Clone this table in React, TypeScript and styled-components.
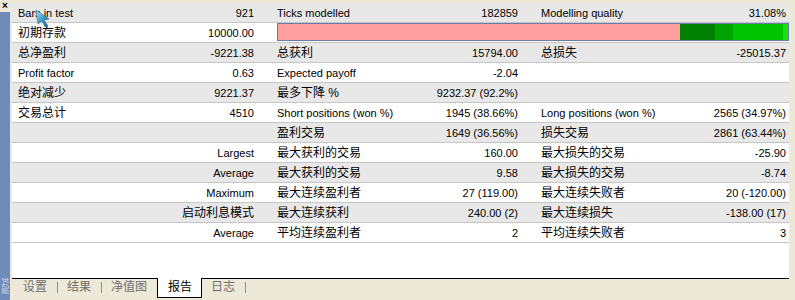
import React from 'react';
import styled, { createGlobalStyle } from 'styled-components';

type Pair = [string, string];

interface ReportRow {
  pairs: Pair[];
  bar?: boolean;
}

const rows: ReportRow[] = [
  { pairs: [['Bars in test', '921'], ['Ticks modelled', '182859'], ['Modelling quality', '31.08%']] },
  { pairs: [['初期存款', '10000.00']], bar: true },
  { pairs: [['总净盈利', '-9221.38'], ['总获利', '15794.00'], ['总损失', '-25015.37']] },
  { pairs: [['Profit factor', '0.63'], ['Expected payoff', '-2.04'], ['', '']] },
  { pairs: [['绝对减少', '9221.37'], ['最多下降 %', '9232.37 (92.2%)'], ['', '']] },
  { pairs: [['交易总计', '4510'], ['Short positions (won %)', '1945 (38.66%)'], ['Long positions (won %)', '2565 (34.97%)']] },
  { pairs: [['', ''], ['盈利交易', '1649 (36.56%)'], ['损失交易', '2861 (63.44%)']] },
  { pairs: [['', 'Largest'], ['最大获利的交易', '160.00'], ['最大损失的交易', '-25.90']] },
  { pairs: [['', 'Average'], ['最大获利的交易', '9.58'], ['最大损失的交易', '-8.74']] },
  { pairs: [['', 'Maximum'], ['最大连续盈利者', '27 (119.00)'], ['最大连续失败者', '20 (-120.00)']] },
  { pairs: [['', '启动利息模式'], ['最大连续获利', '240.00 (2)'], ['最大连续损失', '-138.00 (17)']] },
  { pairs: [['', 'Average'], ['平均连续盈利者', '2'], ['平均连续失败者', '3']] },
];

const tabs = ['设置', '结果', '净值图', '报告', '日志'];
const activeTab = '报告';

const isCjk = (s: string) => /[\u4e00-\u9fff]/.test(s);

const App: React.FC = () => {
  const activeIndex = tabs.indexOf(activeTab);

  return (
    <>
      <GlobalStyle />
      <Window>
        <SideStrip>
          <CloseBox>×</CloseBox>
          <SideLabel>测试</SideLabel>
        </SideStrip>

        <Main>
          <Report>
            {rows.map((row, i) => (
              <Row key={i} $shaded={i % 2 === 0}>
                {row.pairs.map(([label, value], j) => (
                  <Cell key={j} $col={j}>
                    <Text $cjk={isCjk(label)}>{label}</Text>
                    <Text $cjk={isCjk(value)}>{value}</Text>
                  </Cell>
                ))}
                {row.bar && <QualityBar />}
              </Row>
            ))}
            <Filler />
          </Report>

          <TabBar>
            {tabs.map((tab, i) => {
              const active = i === activeIndex;
              const showSep = !active && i !== activeIndex - 1;
              return (
                <React.Fragment key={tab}>
                  <Tab $active={active}>{tab}</Tab>
                  {showSep && <TabSep />}
                </React.Fragment>
              );
            })}
          </TabBar>
        </Main>

        <Cursor width="16" height="19" viewBox="0 0 16 19">
          <defs>
            <linearGradient id="cur" x1="0" y1="0" x2="1" y2="1">
              <stop offset="0" stopColor="#bfe3f2" />
              <stop offset="0.5" stopColor="#3d9cc8" />
              <stop offset="1" stopColor="#1c5f8c" />
            </linearGradient>
          </defs>
          <polygon points="1,1 14,10 9,11 13,17 10,18 7,12 3,15" fill="url(#cur)" stroke="#2b6f93" strokeWidth="0.6" />
        </Cursor>
      </Window>
    </>
  );
};

const GlobalStyle = createGlobalStyle`
  html, body {
    margin: 0;
    padding: 0;
    background: #ece9d8;
    overflow: hidden;
  }
`;

const Window = styled.div`
  position: relative;
  display: flex;
  width: 795px;
  height: 300px;
  background: #ece9d8;
  font-family: "Liberation Sans", "Noto Sans CJK SC", sans-serif;
  color: #000;
`;

const SideStrip = styled.div`
  width: 10px;
  display: flex;
  flex-direction: column;
  justify-content: space-between;
  align-items: center;
  background: #6f8bb7;
`;

const CloseBox = styled.div`
  width: 10px;
  height: 12px;
  background: #ece9d8;
  font-size: 10px;
  font-weight: bold;
  line-height: 12px;
  text-align: center;
`;

const SideLabel = styled.div`
  writing-mode: vertical-rl;
  transform: rotate(180deg);
  font-family: "Noto Sans CJK SC", sans-serif;
  font-size: 8px;
  line-height: 9px;
  color: #d4dcea;
  margin-bottom: 6px;
`;

const Main = styled.div`
  flex: 1;
  display: flex;
  flex-direction: column;
  padding: 3px 6px 0 2px;
`;

const Report = styled.div`
  flex: 1;
  display: flex;
  flex-direction: column;
  background: #fff;
`;

const Row = styled.div<{ $shaded: boolean }>`
  display: grid;
  grid-template-columns: 260px 264px 253px;
  height: 19px;
  border-bottom: 1px solid #c6c6c6;
  background: ${({ $shaded }) => ($shaded ? '#e8e8e8' : '#fff')};
`;

const cellPadding = ['0 18px 0 6px', '0 18px 0 5px', '0 3px 0 5px'];

const Cell = styled.div<{ $col: number }>`
  display: flex;
  justify-content: space-between;
  align-items: center;
  padding: ${({ $col }) => cellPadding[$col]};
  padding-top: 1px;
  white-space: nowrap;
`;

const Text = styled.span<{ $cjk: boolean }>`
  font-size: ${({ $cjk }) => ($cjk ? '12px' : '11px')};
  line-height: 14px;
`;

const QualityBar = styled.div`
  grid-column: 2 / 4;
  margin-left: 5px;
  height: 16px;
  border: 1px solid #6c7ba6;
  background: linear-gradient(
    to right,
    #ff9f9f 0,
    #ff9f9f 402px,
    #008000 402px,
    #008000 437px,
    #00a400 437px,
    #00a400 455px,
    #00c400 455px,
    #00c400 505px,
    #18e018 505px
  );
`;

const Filler = styled.div`
  flex: 1;
`;

const TabBar = styled.div`
  height: 21px;
  display: flex;
  align-items: flex-start;
  padding-left: 2px;
  border-top: 1px solid #000;
  background: #ece9d8;
`;

const Tab = styled.div<{ $active: boolean }>`
  font-size: 12px;
  line-height: 16px;
  color: ${({ $active }) => ($active ? '#000' : '#707070')};
  padding: ${({ $active }) => ($active ? '1px 9px 0 10px' : '0 10px 0 9px')};
  ${({ $active }) =>
    $active &&
    `
    margin-top: -1px;
    height: 18px;
    background: #fff;
    border: 1px solid #000;
    border-top: none;
  `}
`;

const TabSep = styled.div`
  width: 1px;
  height: 11px;
  margin-top: 3px;
  background: #8a8a8a;
`;

const Cursor = styled.svg`
  position: absolute;
  left: 35px;
  top: 9px;
`;

export default App;
